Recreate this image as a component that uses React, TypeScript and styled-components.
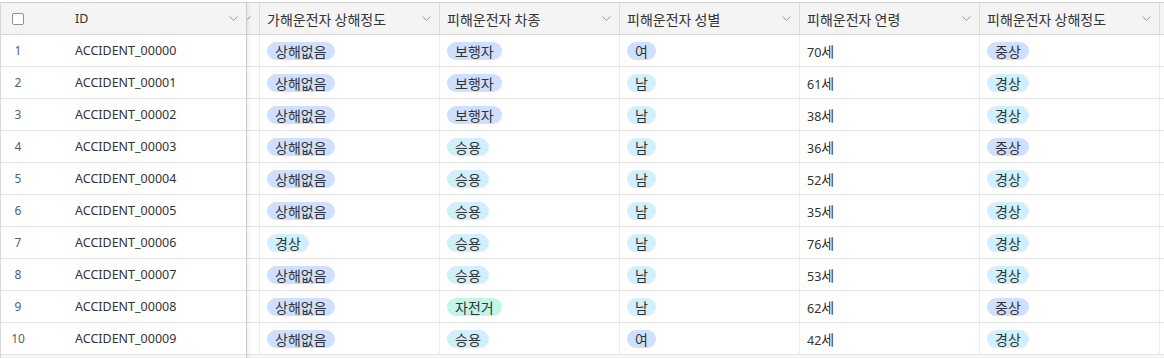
import React, { useLayoutEffect, useRef } from "react";
import styled, { createGlobalStyle } from "styled-components";

const GlobalStyle = createGlobalStyle`
  html, body {
    margin: 0;
    padding: 0;
    background: #ffffff;
  }
  body {
    font-family: "Noto Sans", "Noto Sans CJK KR", sans-serif;
    color: #333333;
  }
`;

type Tone = "blue" | "cyan" | "teal";

const toneColors: Record<Tone, string> = {
  blue: "#cfdfff",
  cyan: "#d0f0fd",
  teal: "#c2f5e9",
};

const tones: Record<string, Tone> = {
  상해없음: "blue",
  보행자: "blue",
  여: "blue",
  중상: "blue",
  남: "cyan",
  승용: "cyan",
  경상: "cyan",
  자전거: "teal",
};

const Page = styled.div`
  padding-top: 2px;
  height: 356px;
  overflow: hidden;
  background: #ffffff;
`;

const Grid = styled.div`
  display: flex;
  height: 100%;
  border-top: 1px solid #d3d3d3;
  border-left: 1px solid #d8d8d8;
  background: #f7f7f7;
`;

const PinnedPane = styled.div`
  position: relative;
  z-index: 1;
  flex: 0 0 246px;
  border-right: 1px solid #cbcbcb;
  box-shadow: 2px 0 3px rgba(0, 0, 0, 0.06);
  box-sizing: border-box;
`;

const ScrollPane = styled.div`
  flex: 1;
  min-width: 0;
  overflow: hidden;
`;

const Track = styled.div<{ $width: number }>`
  width: ${(p) => p.$width}px;
`;

const HeaderRow = styled.div`
  display: flex;
  height: 32px;
  box-sizing: border-box;
  background: #f4f4f4;
  border-bottom: 1px solid #d7d7d7;
`;

const Row = styled.div`
  display: flex;
  height: 32px;
  box-sizing: border-box;
  background: #ffffff;
  border-bottom: 1px solid #e3e3e3;
`;

const Cell = styled.div<{ $width: number; $divider?: boolean; $header?: boolean }>`
  flex: 0 0 ${(p) => p.$width}px;
  display: flex;
  align-items: center;
  box-sizing: border-box;
  padding: 0 8px 0 ${(p) => (p.$divider ? 7 : 10)}px;
  min-width: 0;
  overflow: hidden;
  border-right: ${(p) =>
    p.$divider ? `1px solid ${p.$header ? "#dadada" : "#ececec"}` : "none"};
  font-size: 12.5px;
  white-space: nowrap;
`;

const NumCell = styled.div`
  flex: 0 0 64px;
  display: flex;
  align-items: center;
`;

const NumBox = styled.div`
  width: 34px;
  display: flex;
  justify-content: center;
  font-size: 12px;
  color: #4f6173;
`;

const Checkbox = styled.span`
  display: block;
  width: 12px;
  height: 12px;
  box-sizing: border-box;
  border: 1px solid #8c9196;
  border-radius: 2px;
  background: #ffffff;
`;

const Label = styled.span<{ $cjk?: boolean }>`
  flex: 1;
  overflow: hidden;
  color: #333333;
  ${(p) =>
    p.$cjk &&
    `
    font-family: "Noto Sans CJK KR", sans-serif;
    font-size: 14px;
  `}
`;

const Unit = styled.span`
  font-family: "Noto Sans CJK KR", sans-serif;
  font-size: 14px;
`;

const Chip = styled.span<{ $tone: Tone }>`
  display: inline-flex;
  align-items: center;
  height: 18px;
  padding: 0 8px;
  border-radius: 9px;
  background: ${(p) => toneColors[p.$tone]};
  font-family: "Noto Sans CJK KR", sans-serif;
  font-size: 14px;
  color: #333333;
`;

const Chevron = () => (
  <svg width="9" height="5" viewBox="0 0 9 5" style={{ flex: "0 0 9px" }}>
    <path d="M0.5 0.5 L4.5 4.3 L8.5 0.5" fill="none" stroke="#9a9a9a" strokeWidth="1" />
  </svg>
);

type Rec = {
  id: string;
  hidden: string;
  offenderInjury: string;
  victimVehicle: string;
  victimSex: string;
  victimAge: string;
  victimInjury: string;
};

const raw: [string, string, string, string, string][] = [
  ["상해없음", "보행자", "여", "70", "중상"],
  ["상해없음", "보행자", "남", "61", "경상"],
  ["상해없음", "보행자", "남", "38", "경상"],
  ["상해없음", "승용", "남", "36", "중상"],
  ["상해없음", "승용", "남", "52", "경상"],
  ["상해없음", "승용", "남", "35", "경상"],
  ["경상", "승용", "남", "76", "경상"],
  ["상해없음", "승용", "남", "53", "경상"],
  ["상해없음", "자전거", "남", "62", "중상"],
  ["상해없음", "승용", "여", "42", "경상"],
];

const rows: Rec[] = raw.map((r, i) => ({
  id: `ACCIDENT_${String(i).padStart(5, "0")}`,
  hidden: "",
  offenderInjury: r[0],
  victimVehicle: r[1],
  victimSex: r[2],
  victimAge: r[3],
  victimInjury: r[4],
}));

type Col = { key: keyof Rec | "next"; title: string; kind?: "chip" | "age" };

const columns: Col[] = [
  { key: "hidden", title: "가해운전자 연령" },
  { key: "offenderInjury", title: "가해운전자 상해정도", kind: "chip" },
  { key: "victimVehicle", title: "피해운전자 차종", kind: "chip" },
  { key: "victimSex", title: "피해운전자 성별", kind: "chip" },
  { key: "victimAge", title: "피해운전자 연령", kind: "age" },
  { key: "victimInjury", title: "피해운전자 상해정도", kind: "chip" },
  { key: "next", title: "사고 유형" },
];

const COL_W = 180;

export default function App() {
  const scrollRef = useRef<HTMLDivElement>(null);

  useLayoutEffect(() => {
    if (scrollRef.current) scrollRef.current.scrollLeft = 167;
  }, []);

  return (
    <Page>
      <GlobalStyle />
      <Grid>
        <PinnedPane>
          <HeaderRow>
            <NumCell>
              <NumBox>
                <Checkbox />
              </NumBox>
            </NumCell>
            <Cell $width={181} $header>
              <Label>ID</Label>
              <Chevron />
            </Cell>
          </HeaderRow>
          {rows.map((r, i) => (
            <Row key={r.id}>
              <NumCell>
                <NumBox>{i + 1}</NumBox>
              </NumCell>
              <Cell $width={181}>
                <Label>{r.id}</Label>
              </Cell>
            </Row>
          ))}
        </PinnedPane>

        <ScrollPane ref={scrollRef}>
          <Track $width={columns.length * COL_W}>
            <HeaderRow>
              {columns.map((c) => (
                <Cell key={c.key} $width={COL_W} $divider $header>
                  <Label $cjk>{c.title}</Label>
                  <Chevron />
                </Cell>
              ))}
            </HeaderRow>
            {rows.map((r) => (
              <Row key={r.id}>
                {columns.map((c) => {
                  const v = c.key === "next" ? "" : (r[c.key] as string);
                  return (
                    <Cell key={c.key} $width={COL_W} $divider>
                      {c.kind === "chip" ? (
                        <Chip $tone={tones[v] ?? "blue"}>{v}</Chip>
                      ) : c.kind === "age" ? (
                        <Label>
                          {v}
                          <Unit>세</Unit>
                        </Label>
                      ) : (
                        <Label>{v}</Label>
                      )}
                    </Cell>
                  );
                })}
              </Row>
            ))}
          </Track>
        </ScrollPane>
      </Grid>
    </Page>
  );
}
